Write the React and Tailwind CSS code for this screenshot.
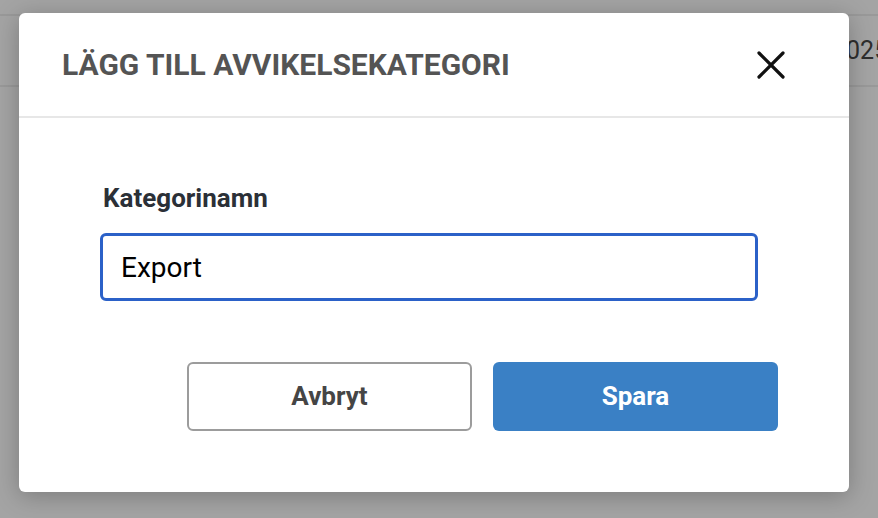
import { useState } from "react"

const CloseIcon = () => (
    <svg width="28" height="28" viewBox="0 0 28 28" fill="none" stroke="#111" strokeWidth="3.2" strokeLinecap="round">
        <path d="M2 2 L26 26" />
        <path d="M26 2 L2 26" />
    </svg>
)

const AddCategoryModal = () => {
    const [name, setName] = useState("Export")

    return (
        <div className="absolute left-[19px] top-[13px] w-[830px] h-[479px] bg-white rounded-[6px] shadow-[0_4px_24px_rgba(0,0,0,0.25)] flex flex-col">
            <div className="h-[105px] shrink-0 flex items-center justify-between pl-[43px] pr-[64px] border-b-2 border-[#e7e7e7]">
                <h1 className="text-[30px] leading-[34px] font-bold text-[#545454]">
                    LÄGG TILL AVVIKELSEKATEGORI
                </h1>
                <button className="flex items-center justify-center">
                    <CloseIcon />
                </button>
            </div>
            <div className="flex flex-col pl-[81px] pr-[71px] pt-[65px]">
                <label className="block pl-[3px] text-[26px] font-bold text-[#2b3037] leading-[30px]">Kategorinamn</label>
                <input
                    value={name}
                    onChange={(e) => setName(e.target.value)}
                    className="mt-[20px] w-[658px] h-[68px] shrink-0 rounded-[6px] border-[3px] border-[#2b61c8] px-[18px] text-[28px] text-black outline-none"
                />
                <div className="flex justify-end gap-[21px] mt-[61px]">
                    <button className="w-[285px] h-[69px] rounded-[6px] border-2 border-[#9c9c9c] bg-white text-[26px] font-bold text-[#454545]">
                        Avbryt
                    </button>
                    <button className="w-[285px] h-[69px] rounded-[6px] bg-[#3a80c5] text-[26px] font-bold text-white">
                        Spara
                    </button>
                </div>
            </div>
        </div>
    )
}

export default function App() {
    return (
        <div className="relative w-full h-[518px] overflow-hidden bg-[#a4a4a4] font-['Roboto',sans-serif]">
            <div className="mt-[14px] border-t-2 border-b-2 border-[#999999] h-[73px] flex items-center">
                <span className="pl-[832px] whitespace-nowrap text-[25px] text-[#2e2e2e]">2025-03-14</span>
            </div>
            <AddCategoryModal />
        </div>
    )
}
